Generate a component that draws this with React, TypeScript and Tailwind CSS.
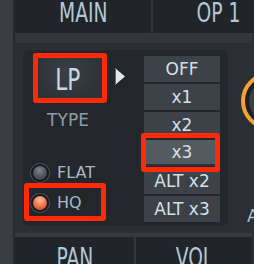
import React from 'react'

const OPTIONS = ['OFF', 'x1', 'x2', 'x3', 'ALT x2', 'ALT x3']

function Radio({ on }: { on?: boolean }) {
  return (
    <div className="w-[20px] h-[20px] rounded-full bg-[#4a5055] p-[1px]">
      <div className="w-full h-full rounded-full bg-[#15181b] p-[2px]">
        <div
          className={
            on
              ? 'w-full h-full rounded-full bg-[radial-gradient(circle_at_50%_30%,#ffc2a4_0%,#f47a50_45%,#b23c1c_100%)]'
              : 'w-full h-full rounded-full bg-[radial-gradient(circle_at_45%_30%,#80878d_0%,#50565b_50%,#33383c_100%)]'
          }
        />
      </div>
    </div>
  )
}

function Mark({ className }: { className: string }) {
  // red annotation frame drawn over the control
  return <div className={`absolute border-[5px] border-[#ff2a08] rounded-[3px] ${className}`} />
}

export default function App() {
  return (
    <div className="relative w-[254px] h-[264px] overflow-hidden flex bg-[#2b2f33] font-['DejaVu_Sans',sans-serif]">
      <div className="w-[15px] shrink-0 bg-[#3a3e42] border-r-2 border-[#272b2f]" />

      <div className="flex flex-col w-[237px] shrink-0">
        {/* Top tabs */}
        <div className="h-[33px] flex shrink-0">
          <div className="w-[136px] shrink-0 bg-[#212529] flex justify-center">
            <span className="inline-block scale-x-[0.8] text-[26px] leading-[26px] text-[#b3c7d5] font-['DejaVu_Sans_Condensed',sans-serif]">
              MAIN
            </span>
          </div>
          <div className="w-[2px] shrink-0 bg-[#33373b]" />
          <div className="w-[130px] shrink-0 bg-[#212529] flex justify-center">
            <span className="inline-block scale-x-[0.8] text-[26px] leading-[26px] text-[#b3c7d5] font-['DejaVu_Sans_Condensed',sans-serif]">
              OP 1
            </span>
          </div>
        </div>
        <div className="h-[10px] shrink-0 bg-[#33373b]" />

        {/* Main area */}
        <div className="h-[190px] shrink-0 flex pl-[8px] pt-[7px] bg-[#2b2f33]">
          <div className="w-[205px] h-[176px] shrink-0 rounded-[6px] bg-[#23272b] flex">
            <div className="w-[121px] shrink-0 pl-[7px] pt-[5px] flex flex-col">
              <div className="flex">
                <div className="ml-[3px] w-[70px] h-[46px] rounded-[3px] bg-[radial-gradient(ellipse_at_50%_40%,#3a4045_0%,#2d3237_70%)] flex items-center justify-center pt-[3px]">
                  <span className="inline-block scale-x-[0.8] text-[30px] leading-[30px] text-[#c9d9e3] font-['DejaVu_Sans_Condensed',sans-serif]">
                    LP
                  </span>
                </div>
                <svg width="10" height="17" viewBox="0 0 10 17" className="ml-[12px] mt-[13px]">
                  <polygon points="0,0 10,8.5 0,17" fill="#dce7ee" />
                  <line x1="0.5" y1="0.5" x2="0.5" y2="16.5" stroke="#4d6ea8" strokeWidth="1" />
                </svg>
              </div>
              <div className="ml-[3px] w-[70px] mt-[11px] text-center text-[17px] leading-[17px] text-[#8e9ea9]">
                TYPE
              </div>
              <div className="mt-[34px] flex items-center gap-[7px]">
                <Radio />
                <span className="text-[16px] leading-[20px] text-[#a9bac6]">FLAT</span>
              </div>
              <div className="mt-[10px] flex items-center gap-[7px]">
                <Radio on />
                <span className="text-[16px] leading-[20px] text-[#a9bac6]">HQ</span>
              </div>
            </div>

            <div className="w-[76px] mt-[6px] flex flex-col gap-[2px]">
              {OPTIONS.map((o) => (
                <div
                  key={o}
                  className={
                    o === 'x3'
                      ? 'h-[26px] flex items-center justify-center bg-[#535a60] border-b-2 border-[#2f3337] text-[17px] leading-[17px] text-[#d3e0e7]'
                      : 'h-[26px] flex items-center justify-center bg-[#3c4247] text-[17px] leading-[17px] text-[#d3e0e7]'
                  }
                >
                  {o}
                </div>
              ))}
            </div>
          </div>

          {/* Knob, cut by the window edge */}
          <div className="ml-[11px] shrink-0 flex flex-col">
            <svg width="62" height="62" viewBox="0 0 62 62" className="mt-[20px]">
              <circle cx="31" cy="31" r="27" fill="#1d2125" stroke="#f4a232" strokeWidth="4" />
              <circle cx="31" cy="31" r="21" fill="#3b4045" />
            </svg>
            <span className="ml-[8px] mt-[76px] text-[17px] leading-[17px] text-[#a8bfd0]">AMT</span>
          </div>
        </div>

        <div className="h-[4px] shrink-0 bg-[#363a3e]" />

        {/* Bottom tabs */}
        <div className="flex-1 flex">
          <div className="w-[119px] shrink-0 bg-[#212529] flex justify-center pt-[8px]">
            <span className="inline-block scale-x-[0.8] text-[26px] leading-[26px] text-[#b3c7d5] font-['DejaVu_Sans_Condensed',sans-serif]">
              PAN
            </span>
          </div>
          <div className="w-[2px] shrink-0 bg-[#33373b]" />
          <div className="w-[116px] shrink-0 bg-[#212529] flex justify-center pt-[8px]">
            <span className="inline-block scale-x-[0.8] text-[26px] leading-[26px] text-[#b3c7d5] font-['DejaVu_Sans_Condensed',sans-serif]">
              VOL
            </span>
          </div>
        </div>
      </div>

      <Mark className="left-[33px] top-[53px] w-[74px] h-[50px]" />
      <Mark className="left-[141px] top-[133px] w-[79px] h-[39px]" />
      <Mark className="left-[24px] top-[183px] w-[82px] h-[38px]" />
    </div>
  )
}
